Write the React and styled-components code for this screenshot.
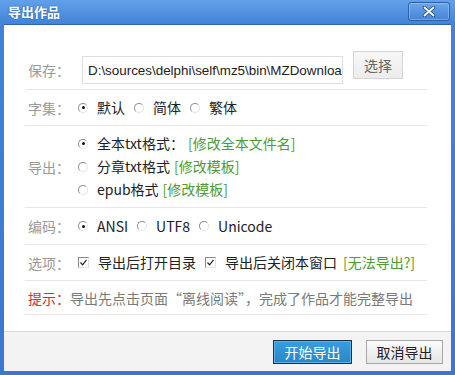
import React from 'react';
import styled, { createGlobalStyle } from 'styled-components';

const GlobalStyle = createGlobalStyle`
  html, body {
    margin: 0;
    padding: 0;
    background: #ffffff;
  }
  body {
    font-family: "Noto Sans CJK SC", "Liberation Sans", sans-serif;
  }
`;

const Window = styled.div`
  width: 455px;
  height: 375px;
  box-sizing: border-box;
  display: flex;
  flex-direction: column;
  background: linear-gradient(#62a1e9, #4283d9 24px, #3a78cf);
  padding: 0 4px 4px;
`;

const TitleBar = styled.div`
  height: 24px;
  display: flex;
  align-items: center;
  justify-content: space-between;
  padding: 0 1px 0 4px;
`;

const Title = styled.div`
  color: #ffffff;
  font-size: 13px;
  font-weight: bold;
  line-height: 24px;
  text-shadow: 0 0 2px #2a5a9c;
`;

const CloseButton = styled.div`
  width: 42px;
  height: 19px;
  margin-top: -2px;
  box-sizing: border-box;
  border: 1px solid #2f5fa6;
  border-radius: 3px;
  background: linear-gradient(#6aa6ea, #4584d8);
  box-shadow: inset 0 0 0 1px rgba(255, 255, 255, 0.25);
  display: flex;
  align-items: center;
  justify-content: center;
`;

const Body = styled.div`
  flex: 1;
  display: flex;
  flex-direction: column;
  background: #ffffff;
  border-top: 1px solid #2e62aa;
`;

const Form = styled.div`
  padding: 0 24px 0 21px;
  flex: 1;
`;

const Row = styled.div`
  display: flex;
  align-items: ${({ $top }) => ($top ? 'flex-start' : 'center')};
  height: ${({ $h }) => $h}px;
  padding: ${({ $pad }) => $pad || '0'};
  padding-left: 3px;
  border-bottom: 1px solid #e6e6e6;
  font-size: 14px;
  color: #222222;
`;

const Label = styled.div`
  width: 50px;
  flex: none;
  color: #9a9a9a;
  line-height: 28px;
  margin-top: ${({ $mt }) => $mt || 0}px;
`;

const PathInput = styled.input`
  width: 261px;
  height: 28px;
  box-sizing: border-box;
  margin: 5px 0 0 4px;
  padding: 0 0 0 5px;
  border: 1px solid #dedede;
  background: #ffffff;
  color: #222222;
  font-family: "Liberation Sans", Arial, sans-serif;
  font-size: 13.4px;
  outline: none;
`;

const SmallButton = styled.div`
  width: 50px;
  height: 28px;
  box-sizing: border-box;
  margin-left: 10px;
  border: 1px solid #d4d4d4;
  background: linear-gradient(#f8f8f8, #ececec);
  color: #666666;
  font-size: 14px;
  display: flex;
  align-items: center;
  justify-content: center;
`;

const Stack = styled.div`
  display: flex;
  flex-direction: column;
`;

const Option = styled.div`
  display: flex;
  align-items: center;
  line-height: 23px;
  margin-right: 9px;
  white-space: nowrap;
`;

const Radio = styled.span`
  width: 10px;
  height: 10px;
  box-sizing: border-box;
  border-radius: 50%;
  border: 1px solid;
  border-color: #8e8e8e #e4e4e4 #e4e4e4 #8e8e8e;
  background: #ffffff;
  margin: 0 9px 0 0;
  display: flex;
  align-items: center;
  justify-content: center;
  flex: none;
  &::after {
    content: '';
    width: 3px;
    height: 3px;
    border-radius: 50%;
    background: ${({ $on }) => ($on ? '#111111' : 'transparent')};
  }
`;

const Check = styled.span`
  width: 11px;
  height: 11px;
  box-sizing: border-box;
  border: 1px solid;
  border-color: #8a8a8a #e2e2e2 #e2e2e2 #8a8a8a;
  background: #ffffff;
  margin-right: 9px;
  display: flex;
  align-items: center;
  justify-content: center;
  flex: none;
`;

const Link = styled.span`
  color: #4f9a35;
  margin-left: ${({ $ml }) => $ml || 0}px;
`;

const Hint = styled.div`
  color: #7a7a7a;
  line-height: 28px;
`;

const HintTag = styled.span`
  color: #c43434;
`;

const Footer = styled.div`
  height: 40px;
  box-sizing: border-box;
  border-top: 1px solid #dcdcdc;
  background: #f3f3f3;
  display: flex;
  align-items: center;
  justify-content: flex-end;
  gap: 14px;
  padding-right: 8px;
`;

const DialogButton = styled.div`
  height: 24px;
  width: ${({ $w }) => $w}px;
  box-sizing: border-box;
  display: flex;
  align-items: center;
  justify-content: center;
  font-size: 14px;
  border: 1px solid ${({ $primary }) => ($primary ? '#16324e' : '#a9a9a9')};
  background: ${({ $primary }) =>
    $primary ? 'linear-gradient(#3a9ede, #2787c9)' : 'linear-gradient(#fafafa, #e6e6e6)'};
  color: ${({ $primary }) => ($primary ? '#ffffff' : '#222222')};
  box-shadow: ${({ $primary }) => ($primary ? 'inset 0 0 0 1px #5fb2e6' : 'none')};
`;

function CheckMark() {
  return (
    <svg width="7" height="7" viewBox="0 0 7 7">
      <path d="M0.5 3.5 L2.6 5.8 L6.5 0.8" fill="none" stroke="#222" strokeWidth="1.2" />
    </svg>
  );
}

export default function App() {
  return (
    <>
      <GlobalStyle />
      <Window>
        <TitleBar>
          <Title>导出作品</Title>
          <CloseButton>
            <svg width="14" height="11" viewBox="0 0 14 11">
              <path d="M2.5 1.5 L11.5 9.5 M11.5 1.5 L2.5 9.5" stroke="#2b4f86" strokeWidth="3.6" strokeLinecap="round" />
              <path d="M2.5 1.5 L11.5 9.5 M11.5 1.5 L2.5 9.5" stroke="#ffffff" strokeWidth="1.8" strokeLinecap="round" />
            </svg>
          </CloseButton>
        </TitleBar>
        <Body>
          <Form>
            <Row $top $h={33} $pad="26px 0 5px">
              <Label $mt={5}>保存：</Label>
              <PathInput readOnly value={'D:\\sources\\delphi\\self\\mz5\\bin\\MZDownload\\'} />
              <SmallButton>选择</SmallButton>
            </Row>
            <Row $h={35}>
              <Label>字集：</Label>
              <Option><Radio $on />默认</Option>
              <Option><Radio />简体</Option>
              <Option><Radio />繁体</Option>
            </Row>
            <Row $h={81}>
              <Label>导出：</Label>
              <Stack>
                <Option><Radio $on />全本txt格式：<Link $ml={4}>[修改全本文件名]</Link></Option>
                <Option><Radio />分章txt格式<Link $ml={4}>[修改模板]</Link></Option>
                <Option><Radio />epub格式<Link $ml={4}>[修改模板]</Link></Option>
              </Stack>
            </Row>
            <Row $h={36}>
              <Label>编码：</Label>
              <Option><Radio $on />ANSI</Option>
              <Option><Radio />UTF8</Option>
              <Option><Radio />Unicode</Option>
            </Row>
            <Row $h={35}>
              <Label>选项：</Label>
              <Option><Check><CheckMark /></Check>导出后打开目录</Option>
              <Option><Check><CheckMark /></Check>导出后关闭本窗口<Link $ml={6}>[无法导出?]</Link></Option>
            </Row>
            <Row $h={33}>
              <Hint><HintTag>提示：</HintTag>导出先点击页面“离线阅读”，完成了作品才能完整导出</Hint>
            </Row>
          </Form>
          <Footer>
            <DialogButton $primary $w={79}>开始导出</DialogButton>
            <DialogButton $w={77}>取消导出</DialogButton>
          </Footer>
        </Body>
      </Window>
    </>
  );
}
